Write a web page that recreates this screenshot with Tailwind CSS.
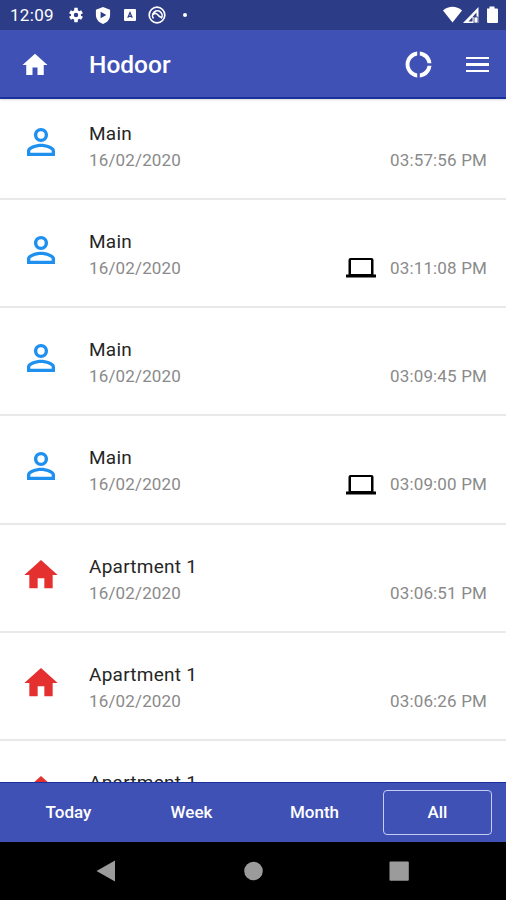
<!DOCTYPE html>
<html lang="en">
<head>
    <meta charset="UTF-8">
    <meta name="viewport" content="width=device-width, initial-scale=1.0">
    <title>Hodoor</title>
    <script src="https://cdn.jsdelivr.net/npm/@tailwindcss/browser@4"></script>
</head>
<body class="bg-white font-['Roboto',sans-serif]">
    <svg class="hidden">
        <symbol id="home" viewBox="0 0 24 24"><path d="M10 20v-6h4v6h5v-8h3L12 3 2 12h3v8z"/></symbol>
        <symbol id="person" viewBox="0 0 24 24"><path d="M12 5.9a2.1 2.1 0 1 1 0 4.2 2.1 2.1 0 0 1 0-4.2m0 9c2.97 0 6.1 1.46 6.1 2.1v1.1H5.9V17c0-.64 3.13-2.1 6.1-2.1M12 4C9.79 4 8 5.79 8 8s1.79 4 4 4 4-1.79 4-4-1.79-4-4-4zm0 9c-2.67 0-8 1.34-8 4v3h16v-3c0-2.66-5.33-4-8-4z"/></symbol>
        <symbol id="laptop" viewBox="0 0 30 20"><path d="M4.500 0h21a2 2 0 0 1 2 2v14.500H30V19.500H0V16.500h2.500V2a2 2 0 0 1 2-2zm.5 2v14h20V2z" fill-rule="evenodd"/></symbol>
    </svg>

    <div class="flex flex-col h-[900px] w-[506px] overflow-hidden">
        <!-- Status bar -->
        <div class="flex items-center h-[30px] shrink-0 bg-[#2d3c86] pl-[10px] pr-[8px] text-white">
            <span class="w-[58px] text-[17px] leading-[30px] tracking-[0.3px]">12:09</span>
            <svg class="size-[16px]" viewBox="0 0 24 24" fill="#fff"><path d="M19.400 13a7.800 7.800 0 0 0 0-2l3-1.700-2.700-4.600-3 1.500a7 7 0 0 0-1.800-1L14.500 1h-5l-.4 4.200a7 7 0 0 0-1.800 1L4.300 4.700l-2.700 4.600L4.600 11a7.800 7.800 0 0 0 0 2l-3 1.700 2.700 4.600 3-1.500a7 7 0 0 0 1.800 1l.4 4.200h5l.4-4.200a7 7 0 0 0 1.800-1l3 1.500 2.700-4.600zM12 15.300a3.300 3.300 0 1 1 0-6.600 3.300 3.300 0 0 1 0 6.600z"/></svg>
            <svg class="ml-[11px] w-[16px] h-[17px]" viewBox="0 0 16 18"><path d="M8 0l7.500 3v5.500c0 4.500-3 8-7.500 9.500C3.500 16.500.5 13 .5 8.500V3z" fill="#fff"/><path d="M5.500 5l6 3.500-6 3.500z" fill="#2d3c86"/></svg>
            <svg class="ml-[13px] size-[12px]" viewBox="0 0 12 12"><rect width="12" height="12" rx="1" fill="#fff"/><path d="M3.800 8.800L6 3.500l2.200 5.300M4.700 7.300h2.600" fill="none" stroke="#2d3c86" stroke-width="1.200"/></svg>
            <svg class="ml-[12px] size-[18px]" viewBox="0 0 18 18" fill="none" stroke="#fff"><circle cx="9" cy="9" r="7.800" stroke-width="1.700"/><path d="M5.500 12.500a4.800 4.800 0 1 1 7.700 0M5 8.500c2-2 4-1 5 .5s2 2.500 3.500 2" stroke-width="1.600"/></svg>
            <span class="ml-[17px] size-[4px] rounded-full bg-white"></span>
            <svg class="ml-auto w-[55px] h-[18px]" viewBox="0 0 55 18" fill="#fff"><path d="M0 4.500C5.500-.5 13.500-.5 19 4.500L9.500 16.500z"/><path d="M35.500 1v16H20zM33.500 6.500L25.500 15.500H29.500v-4.500h4z" fill-rule="evenodd"/><path d="M35 11v6h-4v-6z" stroke="#2d3c86" stroke-width=".8"/><path d="M44 2.500h2.500V.5h5v2H54a1 1 0 0 1 1 1V16a1 1 0 0 1-1 1H45a1 1 0 0 1-1-1V3.500z"/></svg>
        </div>

        <!-- App bar -->
        <header class="relative flex items-center h-[69px] shrink-0 bg-[#3f51b5] border-b-2 border-[#1a309c] pl-[20px] pr-[17px] text-white shadow-[0_1px_2px_rgba(0,0,0,0.15)]">
            <svg class="size-[30px] mt-[2px]" fill="#fff"><use href="#home"/></svg>
            <h1 class="ml-[39px] pt-[3px] text-[24.5px] font-medium">Hodoor</h1>
            <svg class="ml-auto mt-[2px] size-[31px]" viewBox="0 0 24 24" fill="#fff"><path d="M11 5.080V2c-5 .5-9 4.810-9 10s4 9.500 9 10v-3.080c-3-.48-6-3.400-6-6.920s3-6.440 6-6.920zM18.970 11H22c-.47-5-4-8.530-9-9v3.080C16 5.510 18.540 8 18.970 11zM13 18.920V22c5-.47 8.530-4 9-9h-3.030c-.43 3-2.970 5.490-5.970 5.920z"/></svg>
            <div class="ml-[32px] mt-[2px] w-[23px] flex flex-col gap-[4px]">
                <span class="h-[2.500px] bg-white"></span>
                <span class="h-[2.500px] bg-white"></span>
                <span class="h-[2.500px] bg-white"></span>
            </div>
        </header>

        <!-- Event log, scrolled a few pixels under the app bar -->
        <main class="flex-1 min-h-0 overflow-hidden">
            <ul id="events" class="-mt-[7.500px]"></ul>
        </main>

        <!-- Range tabs -->
        <nav class="grid grid-cols-4 items-center h-[60px] shrink-0 bg-[#3f51b5] border-t border-[#1a309c] px-[7px] text-white text-[17px] font-medium text-center">
            <a>Today</a>
            <a>Week</a>
            <a>Month</a>
            <a class="px-[7px]"><span class="block h-[45px] leading-[42px] rounded-[4px] border-[1.5px] border-[#c5cdf5]">All</span></a>
        </nav>

        <!-- System navigation -->
        <div class="h-[58px] shrink-0 bg-black">
            <svg class="w-[506px] h-[58px]" viewBox="0 0 506 58" fill="#9b9b9b"><path d="M96.500 29L115 18.500v21z"/><circle cx="253.500" cy="29" r="9.300"/><rect x="389.500" y="19.500" width="19.300" height="19.300" rx="1"/></svg>
        </div>
    </div>

    <template id="row">
        <li class="flex h-[108.3px] border-b-2 border-[#e9e9e9] pl-[20px] pr-[19px] pt-[29px]">
            <div class="w-[42px] shrink-0 flex justify-center">
                <svg class="icon"><use/></svg>
            </div>
            <div class="ml-[27px]">
                <p class="name text-[19px] leading-[26px] tracking-[0.25px] text-[#262626]"></p>
                <p class="text-[17px] leading-[27px] tracking-[0.15px] text-[#8a8a8a]">16/02/2020</p>
            </div>
            <div class="ml-auto mt-[26px] h-[27px] flex items-center gap-[14.5px]">
                <svg class="laptop w-[30px] h-[20px]"><use href="#laptop"/></svg>
                <span class="time text-[17px] leading-[27px] tracking-[0.15px] text-[#8a8a8a]"></span>
            </div>
        </li>
    </template>

    <script>
        const events = [
            { name: 'Main', time: '03:57:56 PM' },
            { name: 'Main', time: '03:11:08 PM', laptop: true },
            { name: 'Main', time: '03:09:45 PM' },
            { name: 'Main', time: '03:09:00 PM', laptop: true },
            { name: 'Apartment 1', time: '03:06:51 PM' },
            { name: 'Apartment 1', time: '03:06:26 PM' },
            { name: 'Apartment 1', time: '03:06:02 PM' },
        ];
        const list = document.getElementById('events');
        const template = document.getElementById('row');

        events.forEach((event) => {
            const row = template.content.cloneNode(true);
            const icon = row.querySelector('.icon');
            const isMain = event.name === 'Main';
            icon.firstElementChild.setAttribute('href', isMain ? '#person' : '#home');
            icon.classList.add(...(isMain ? ['size-[42px]', 'fill-[#1e90f0]'] : ['size-[40px]', 'mt-[1px]', 'fill-[#e53030]']));
            row.querySelector('.name').textContent = event.name;
            row.querySelector('.time').textContent = event.time;
            if (!event.laptop) row.querySelector('.laptop').remove();
            list.appendChild(row);
        });
    </script>
</body>
</html>
